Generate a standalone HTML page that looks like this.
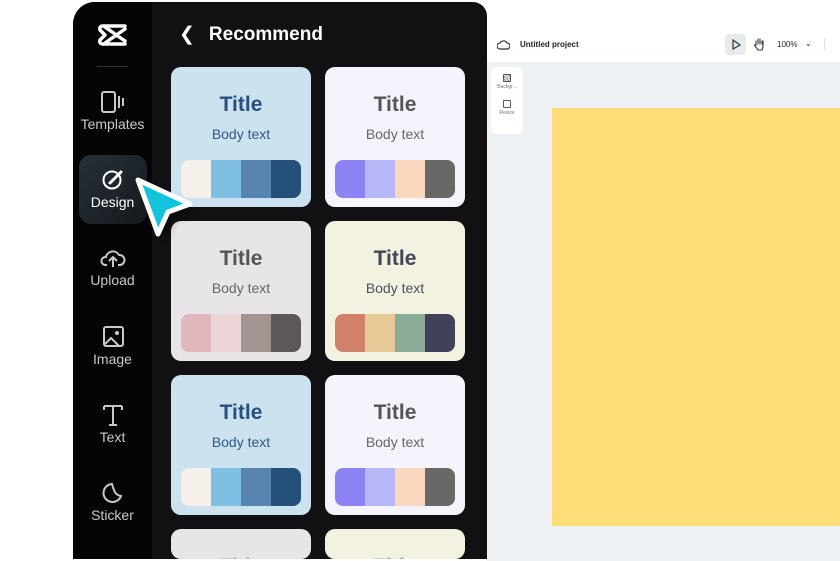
<!DOCTYPE html>
<html><head><meta charset="utf-8"><style>
*{margin:0;padding:0;box-sizing:border-box}
html,body{width:840px;height:561px;overflow:hidden}
body{background:#fff;position:relative;font-family:"Liberation Sans",sans-serif}
.dark{position:absolute;left:73px;top:2px;width:414px;height:557px;background:#111113;border-radius:22px 14px 0 0;overflow:hidden}
.side{position:absolute;left:0;top:0;width:79px;height:100%;background:#050505}
.nav{position:absolute;left:0;width:79px;text-align:center;color:#c9c9cc;font-size:14px}
.nav svg{display:block;margin:0 auto 2px}
.card{position:absolute;width:140px;height:140px;border-radius:10px;text-align:center;overflow:hidden}
.card .t{position:absolute;top:26px;width:100%;font-size:21px;font-weight:bold}
.card .b{position:absolute;top:59px;width:100%;font-size:14px}
.pal{position:absolute;left:10px;top:93px;width:120px;height:38px;border-radius:8px;overflow:hidden;display:flex}
.pal i{flex:1}
</style></head><body>
<div class="dark">
 <div class="side">
  <svg style="position:absolute;left:24px;top:20px" width="32" height="26" viewBox="0 0 32 26"><path d="M6 4 H28 M6 22 H28 M8 5 L28 19 M8 21 L28 7 M6 4 Q2 4 3 8 L8 13 M6 22 Q2 22 3 18 L8 13" fill="none" stroke="#fff" stroke-width="3.5" stroke-linecap="round" stroke-linejoin="round"/></svg>
  <div style="position:absolute;left:24px;top:64px;width:31px;height:1px;background:#333"></div>
  <div class="nav" style="top:88px"><svg width="26" height="24" viewBox="0 0 26 24"><rect x="2" y="2" width="13" height="20" rx="2" fill="none" stroke="#c9c9cc" stroke-width="2"/><path d="M19 6v12M23 8v8" stroke="#c9c9cc" stroke-width="2"/></svg>Templates</div>
  <div style="position:absolute;left:6px;top:153px;width:68px;height:69px;border-radius:12px;background:linear-gradient(135deg,#26303a,#15191d)"></div>
  <div class="nav" style="top:166px;color:#fff"><svg width="24" height="24" viewBox="0 0 24 24"><circle cx="11" cy="12" r="8.5" fill="none" stroke="#fff" stroke-width="2"/><path d="M20 4 L9 15" stroke="#fff" stroke-width="3" stroke-linecap="round"/></svg>Design</div>
  <div class="nav" style="top:244px"><svg width="26" height="24" viewBox="0 0 26 24"><path d="M7 19 H5 A4 4 0 0 1 6 11 A7 7 0 0 1 19 9 A5 5 0 0 1 20 19 H18" fill="none" stroke="#c9c9cc" stroke-width="2"/><path d="M13 21 V12 M9 15 L13 11 L17 15" fill="none" stroke="#c9c9cc" stroke-width="2"/></svg>Upload</div>
  <div class="nav" style="top:323px"><svg width="24" height="24" viewBox="0 0 24 24"><rect x="3" y="2" width="19" height="19" rx="2" fill="none" stroke="#c9c9cc" stroke-width="2"/><circle cx="16" cy="8" r="2" fill="#c9c9cc"/><path d="M4 19 L10 13 L18 21" fill="none" stroke="#c9c9cc" stroke-width="2"/></svg>Image</div>
  <div class="nav" style="top:401px"><svg width="24" height="24" viewBox="0 0 24 24"><path d="M3 3 H21 M12 3 V22 M8 22 H16 M3 3 V7 M21 3 V7" fill="none" stroke="#c9c9cc" stroke-width="2"/></svg>Text</div>
  <div class="nav" style="top:479px"><svg width="24" height="24" viewBox="0 0 24 24"><path d="M20 15 A9 9 0 1 1 11 3 C13 10 14 14 20 15 Z" fill="none" stroke="#c9c9cc" stroke-width="2"/></svg>Sticker</div>
 </div>
 <div style="position:absolute;left:106px;top:21px;color:#fff;font-size:19px;font-weight:bold"><span style="font-weight:normal;margin-right:14px">&#10094;</span>Recommend</div>
 <div class="card" style="left:98px;top:65px;background:#cce3ef"><div class="t" style="color:#28507e">Title</div><div class="b" style="color:#2f5885">Body text</div><div class="pal"><i style="background:#f5f1ea"></i><i style="background:#7fbfe4"></i><i style="background:#5884b0"></i><i style="background:#245079"></i></div></div>
 <div class="card" style="left:252px;top:65px;background:#f5f4fc"><div class="t" style="color:#555">Title</div><div class="b" style="color:#666">Body text</div><div class="pal"><i style="background:#8d83f4"></i><i style="background:#b6b7f6"></i><i style="background:#f8d7be"></i><i style="background:#6a6866"></i></div></div>
 <div class="card" style="left:98px;top:219px;background:#e7e5e8"><div class="t" style="color:#555">Title</div><div class="b" style="color:#666">Body text</div><div class="pal"><i style="background:#e1b6bc"></i><i style="background:#ebd5d6"></i><i style="background:#a39391"></i><i style="background:#5e5758"></i></div></div>
 <div class="card" style="left:252px;top:219px;background:#f3f1e0"><div class="t" style="color:#454558">Title</div><div class="b" style="color:#4f4f60">Body text</div><div class="pal"><i style="background:#d1806a"></i><i style="background:#e5c997"></i><i style="background:#8aab98"></i><i style="background:#41415a"></i></div></div>
 <div class="card" style="left:98px;top:373px;background:#cce3ef"><div class="t" style="color:#28507e">Title</div><div class="b" style="color:#2f5885">Body text</div><div class="pal"><i style="background:#f5f1ea"></i><i style="background:#7fbfe4"></i><i style="background:#5884b0"></i><i style="background:#245079"></i></div></div>
 <div class="card" style="left:252px;top:373px;background:#f5f4fc"><div class="t" style="color:#555">Title</div><div class="b" style="color:#666">Body text</div><div class="pal"><i style="background:#8d83f4"></i><i style="background:#b6b7f6"></i><i style="background:#f8d7be"></i><i style="background:#6a6866"></i></div></div>
 <div class="card" style="left:98px;top:527px;height:30px;background:#e7e5e8"><div class="t" style="color:#aaa">Title</div></div>
 <div class="card" style="left:252px;top:527px;height:30px;background:#f3f1e0"><div class="t" style="color:#aaa">Title</div></div>
</div>
<svg style="position:absolute;left:128px;top:170px" width="80" height="80" viewBox="0 0 80 80"><defs><filter id="s"><feGaussianBlur stdDeviation="4"/></filter></defs><path d="M14 14 L62 36 L42 44 L32 64 Z" fill="#000" opacity=".35" filter="url(#s)" transform="translate(4,6)"/><path d="M10 10 L62 34 L40 42 L30 64 Z" fill="#12c4dc" stroke="#fff" stroke-width="5" stroke-linejoin="round"/></svg>
<div style="position:absolute;left:487px;top:28px;width:353px;height:34px;background:#fff;font-size:8px;color:#222">
 <svg style="position:absolute;left:10px;top:11px" width="13" height="11" viewBox="0 0 13 11"><path d="M3 10 H10 A3 3 0 0 0 10 4 A4 4 0 0 0 3 4 A3 3 0 0 0 3 10 Z" fill="none" stroke="#333" stroke-width="1.2"/></svg>
 <div style="position:absolute;left:33px;top:12px;font-weight:bold">Untitled project</div>
 <div style="position:absolute;left:238px;top:6px;width:21px;height:21px;border-radius:4px;background:#e6ebef"></div>
 <svg style="position:absolute;left:244px;top:11px" width="10" height="11" viewBox="0 0 10 11"><path d="M2 1 L9 6 L2 10 Z" fill="none" stroke="#333" stroke-width="1.2"/></svg>
 <svg style="position:absolute;left:266px;top:9px" width="12" height="14" viewBox="0 0 12 14"><path d="M3 8 V4 M5 7 V2 M7 7 V2 M9 7 V4 M3 8 Q1 7 2 9 L5 13 H9 Q10 11 10 8 V4" fill="none" stroke="#333" stroke-width="1.1" stroke-linecap="round"/></svg>
 <div style="position:absolute;left:290px;top:12px">100%</div>
 <div style="position:absolute;left:318px;top:11px">&#8964;</div>
 <div style="position:absolute;left:337px;top:10px;width:1px;height:12px;background:#ddd"></div>
</div>
<div style="position:absolute;left:487px;top:62px;width:353px;height:499px;background:#eef2f5"></div>
<div style="position:absolute;left:491px;top:67px;width:32px;height:67px;background:#fff;border-radius:6px;font-size:5px;color:#777;text-align:center">
 <div style="margin:7px auto 2px;width:8px;height:8px;border:1px solid #555;border-radius:1px;background:repeating-linear-gradient(45deg,#fff 0 1px,#888 1px 2px)"></div>Backgr...
 <div style="margin:10px auto 2px;width:8px;height:8px;border:1px solid #555;border-radius:1px"></div>Resize
</div>
<div style="position:absolute;left:552px;top:108px;width:288px;height:418px;background:#fddd78"></div>
</body></html>
